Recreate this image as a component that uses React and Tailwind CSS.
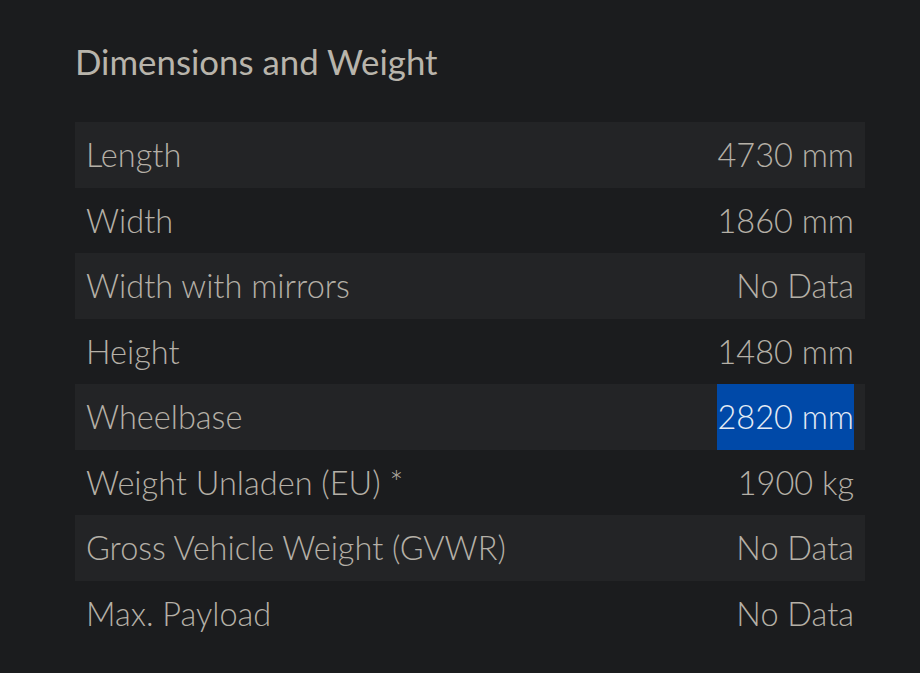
const rows = [
  ["Length", "4730 mm"],
  ["Width", "1860 mm"],
  ["Width with mirrors", "No Data"],
  ["Height", "1480 mm"],
  ["Wheelbase", "2820 mm", true],
  ["Weight Unladen (EU) *", "1900 kg"],
  ["Gross Vehicle Weight (GVWR)", "No Data"],
  ["Max. Payload", "No Data"],
];

const App = () => {
  return (
    <div className="min-h-screen w-full bg-[#1b1c1e] font-['Lato',sans-serif] text-[#b5b0a7]">
      <div className="pl-[75px] pr-[55px] pt-[36px]">
        <h2 className="text-[34.8px] leading-[52px] font-normal text-[#b8b4ab]">
          Dimensions and Weight
        </h2>
        <div className="mt-[34px]">
          {rows.map(([label, value, selected], i) => (
            <div
              key={label}
              className={`flex justify-between pl-[11px] pr-[11px] h-[65.5px] text-[32.5px] font-light leading-[65.5px] ${
                i % 2 === 0 ? "bg-[#232426]" : ""
              }`}
            >
              <span>{label}</span>
              {selected ? (
                <span className="bg-[#0049a8] text-[#e6ecf5]">{value}</span>
              ) : (
                <span>{value}</span>
              )}
            </div>
          ))}
        </div>
      </div>
    </div>
  );
};

export default App;
